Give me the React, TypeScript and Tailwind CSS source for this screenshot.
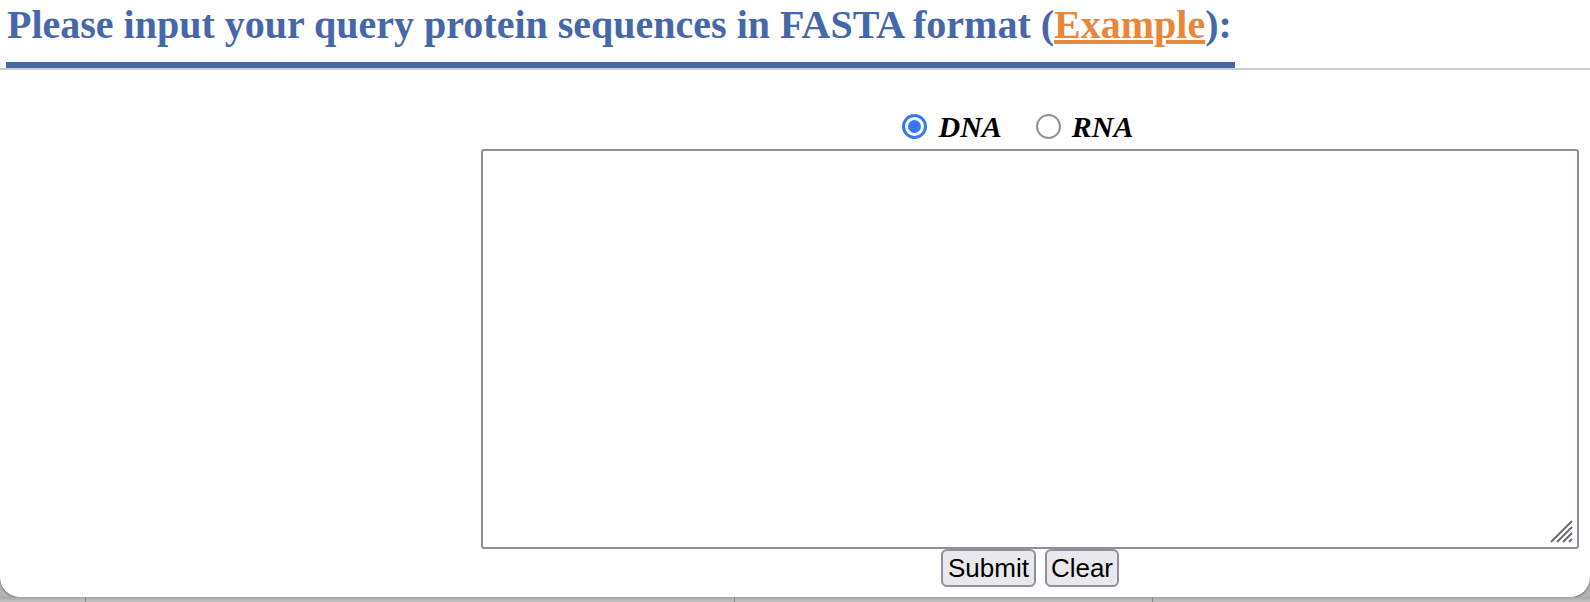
import { useState } from "react";

type SeqType = "DNA" | "RNA";

function Radio({ checked }: { checked: boolean }) {
  if (checked) {
    return (
      <span className="flex h-[25px] w-[25px] items-center justify-center rounded-full border-[3px] border-[#3478f6] bg-white">
        <span className="h-[13px] w-[13px] rounded-full bg-[#3478f6]" />
      </span>
    );
  }
  return <span className="block h-[25px] w-[25px] rounded-full border-2 border-[#8f8f9d] bg-white" />;
}

export default function App() {
  const [seqType, setSeqType] = useState<SeqType>("DNA");
  const [sequence, setSequence] = useState("");

  return (
    <div className="flex h-[602px] w-full flex-col overflow-hidden bg-[#b2b2b2]">
      <div className="h-[597px] shrink-0 rounded-b-[20px] bg-white shadow-[0_1px_2px_rgba(0,0,0,0.4)]">
        <div className="flex border-b-2 border-[#cccccc]">
          <h2 className="ml-[6px] border-b-[6px] border-[#4667a9] pb-[14px] pl-[1px] pr-[3px] pt-[2px] font-['Liberation_Serif',serif] text-[40px] font-bold leading-[46px] text-[#4667a9]">
            Please input your query protein sequences in FASTA format (
            <a href="#" className="text-[#e6873a] underline">
              Example
            </a>
            ):
          </h2>
        </div>

        <form
          className="flex flex-col pl-[481px] pr-[11px]"
          onSubmit={(e) => e.preventDefault()}
        >
          <div className="mt-[40px] flex h-[33px] items-center justify-center pr-[24px] font-['Liberation_Serif',serif] text-[30px] font-bold italic text-black">
            {(["DNA", "RNA"] as SeqType[]).map((t, i) => (
              <label
                key={t}
                className={`flex cursor-pointer items-center gap-[11px] ${i > 0 ? "ml-[34px]" : ""}`}
                onClick={() => setSeqType(t)}
              >
                <Radio checked={seqType === t} />
                <span className="leading-[33px]">{t}</span>
              </label>
            ))}
          </div>

          <div className="relative mt-[6px]">
            <textarea
              value={sequence}
              onChange={(e) => setSequence(e.target.value)}
              className="block h-[400px] w-full resize-none rounded-[3px] border-2 border-[#8f8f9d] bg-white p-1 font-['Liberation_Mono',monospace] text-[22px] outline-none"
            />
            {/* resize grip */}
            <svg
              className="pointer-events-none absolute bottom-[6px] right-[6px]"
              width="24"
              height="24"
              viewBox="0 0 24 24"
              stroke="#6b6b6b"
              strokeWidth="2"
            >
              <line x1="2" y1="23" x2="23" y2="2" />
              <line x1="8" y1="23" x2="23" y2="8" />
              <line x1="14" y1="23" x2="23" y2="14" />
              <line x1="20" y1="23" x2="23" y2="20" />
            </svg>
          </div>

          <div className="flex justify-center gap-[9px]">
            <button
              type="submit"
              className="h-[38px] rounded-[6px] border-2 border-[#8f8f9d] bg-[#e9e9ed] px-[5px] font-['Liberation_Sans',sans-serif] text-[26px] leading-[30px] text-black"
            >
              Submit
            </button>
            <button
              type="button"
              onClick={() => setSequence("")}
              className="h-[38px] rounded-[6px] border-2 border-[#8f8f9d] bg-[#e9e9ed] px-[4px] font-['Liberation_Sans',sans-serif] text-[26px] leading-[30px] text-black"
            >
              Clear
            </button>
          </div>
        </form>
      </div>

      {/* page behind the dialog */}
      <div className="flex h-[5px] bg-gradient-to-b from-[#a4a4a4] to-[#c6c6c6]">
        <div className="w-[86px] border-r border-[#8a8a8a]" />
        <div className="w-[649px] border-r border-[#8a8a8a]" />
        <div className="w-[418px] border-r border-[#8a8a8a]" />
        <div className="flex-1" />
      </div>
    </div>
  );
}
